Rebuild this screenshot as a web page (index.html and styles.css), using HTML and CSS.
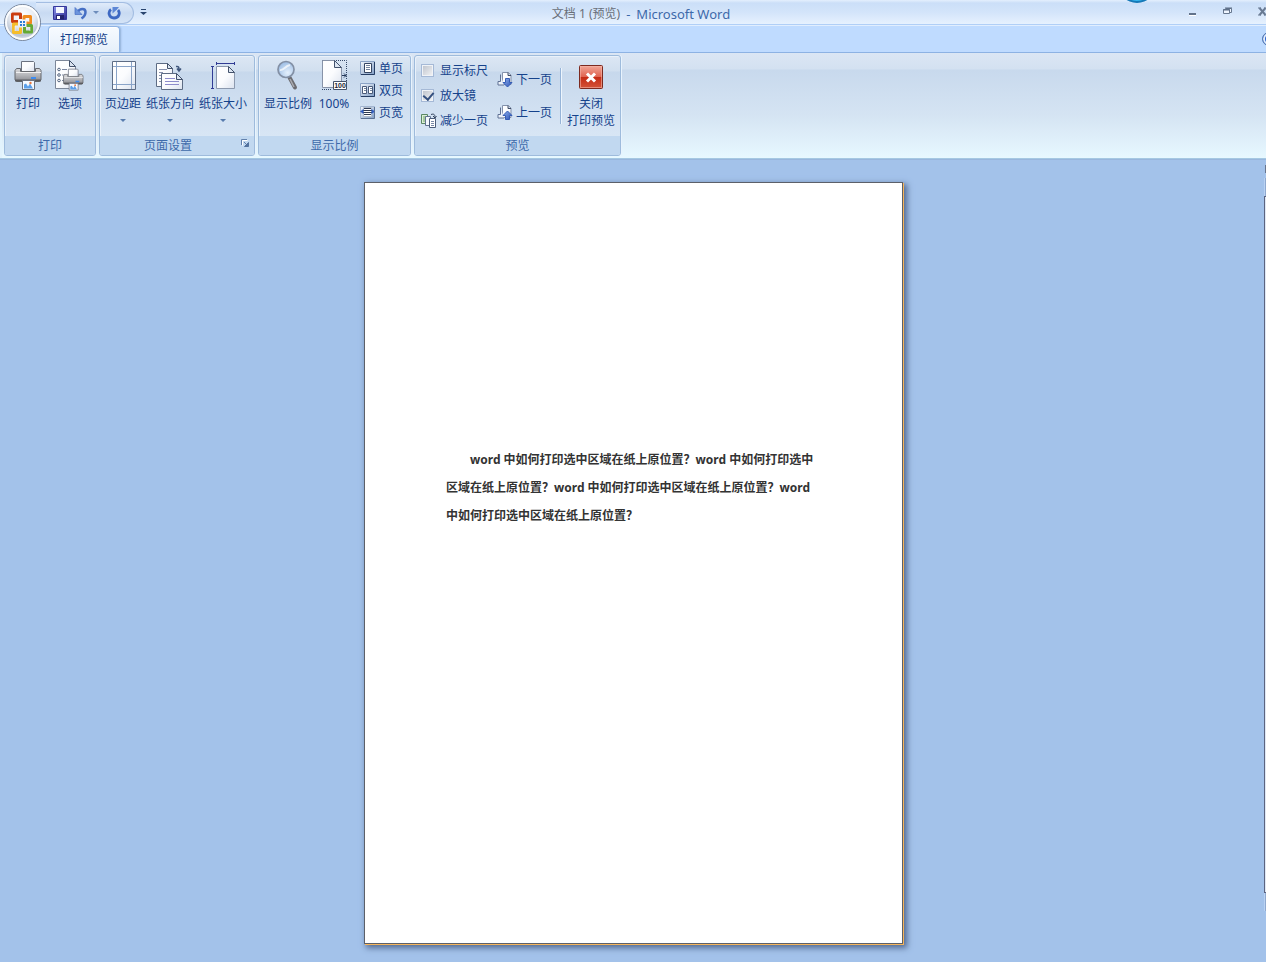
FILE: index.html
```html
<!DOCTYPE html>
<html lang="zh-CN">
<head>
<meta charset="utf-8">
<meta name="viewport" content="width=device-width, initial-scale=1">
<title>文档 1 (预览) - Microsoft Word</title>
<link rel="stylesheet" href="styles.css">
</head>
<body>
<svg class="defs" width="0" height="0" aria-hidden="true">
  <defs>
    <linearGradient id="paper" x1="0" y1="0" x2="1" y2="1"><stop offset="0" stop-color="#fff"/><stop offset=".5" stop-color="#fbfcfe"/><stop offset="1" stop-color="#dbe2ee"/></linearGradient>
    <linearGradient id="metal" x1="0" y1="0" x2="0" y2="1"><stop offset="0" stop-color="#d9d9dc"/><stop offset=".5" stop-color="#b5b6ba"/><stop offset="1" stop-color="#8a8b90"/></linearGradient>
    <linearGradient id="blue" x1="0" y1="0" x2="1" y2="1"><stop offset="0" stop-color="#8fb2ee"/><stop offset="1" stop-color="#2b50b4"/></linearGradient>
    <linearGradient id="tile" x1="0" y1="0" x2="1" y2="1"><stop offset="0" stop-color="#f4f8fd"/><stop offset="1" stop-color="#7f9cc4"/></linearGradient>
    <linearGradient id="disk" x1="0" y1="0" x2="1" y2="1"><stop offset="0" stop-color="#8c93ea"/><stop offset="1" stop-color="#2a2a91"/></linearGradient>
    <linearGradient id="red" x1="0" y1="0" x2="0" y2="1"><stop offset="0" stop-color="#f2a899"/><stop offset=".48" stop-color="#e06552"/><stop offset=".5" stop-color="#c42a14"/><stop offset="1" stop-color="#d4553a"/></linearGradient>
    <radialGradient id="orb" cx=".5" cy=".3" r=".7"><stop offset="0" stop-color="#fff"/><stop offset=".5" stop-color="#e6eaf1"/><stop offset=".8" stop-color="#b9c3d2"/><stop offset="1" stop-color="#eef3fa"/></radialGradient>
    <radialGradient id="lens" cx=".6" cy=".7" r=".7"><stop offset="0" stop-color="#e4f0fc"/><stop offset="1" stop-color="#9dbde4"/></radialGradient>
    <g id="printer">
      <path d="M8.500 1.500h12l1 1v9h-13z" fill="url(#paper)" stroke="#6b7280"/>
      <path d="M3.500 8.500h4v3h15v-3h4l1.500 2v9l-1.500 2h-23l-1.500-2v-9z" fill="url(#metal)" stroke="#66686d"/>
      <path d="M3 12.500h25" stroke="#f0f0f1"/>
      <path d="M2 20.500h26" stroke="#5b5c60" stroke-width="2"/>
      <path d="M18 18h5" stroke="#3e8cf0" stroke-width="2"/>
      <path d="M9.500 20.500h12v9h-12z" fill="#f5f9ff" stroke="#6b7280"/>
      <path d="M11 28.500v-4l2-1 2 3 2-3 3 5z" fill="#5b9fe9"/><circle cx="17.500" cy="23" r="1.200" fill="#e9783e"/>
    </g>
    <g id="page-small">
      <path d="M5.500 .5h6l2.500 2.500v9.500h-8.500z" fill="url(#paper)" stroke="#8391ab"/>
      <path d="M11 .5v3h3" fill="#cbd6e8" stroke="#3e4c66"/>
      <path d="M3.500 2.500v7H1v3.500h6" fill="#edf2fa" stroke="#5f7194"/>
    </g>
  </defs>
</svg>

<header class="titlebar">
  <button class="orb" type="button" aria-label="Office">
    <svg width="40" height="40" viewBox="0 0 40 40">
      <circle cx="20.500" cy="20.500" r="18" fill="url(#orb)" stroke="#77869d"/>
      <circle cx="20.500" cy="20.500" r="16.500" fill="none" stroke="#fff" stroke-opacity=".9" stroke-width="2"/>
      <g fill="none" stroke-width="3" stroke-linejoin="round">
        <path d="M16 19.500h-5.500v-7.500h8v5" stroke="#cb3c10"/>
        <path d="M22 17.500v-3h6.500v6.500h-4" stroke="#f08a1c"/>
        <path d="M16 22h-4.500v8.500h7v-5" stroke="#f5bd2d"/>
        <path d="M24.500 23.500h5v6.500h-7v-5" stroke="#64a934"/>
      </g>
      <path d="M12 13.500v4.500M27 16v4M13 24v5M28 25v4" stroke="#fff" stroke-opacity=".5"/>
      <g fill="#2d7cd4"><rect x="18" y="19" width="2" height="2"/><rect x="21" y="19" width="2" height="2"/><rect x="18" y="22" width="2" height="2"/><rect x="21" y="22" width="2" height="2"/></g>
    </svg>
  </button>
  <div class="quick">
    <button type="button" aria-label="保存"><svg width="16" height="16" viewBox="0 0 16 16"><path d="M1.500 1.500h13v13h-13z" fill="url(#disk)" stroke="#35389c"/><path d="M4 2h8v6H4z" fill="#f4f7ff"/><path d="M4 10h8v4.500H4z" fill="#23236d"/><path d="M5 11h3v3H5z" fill="#fff"/></svg></button>
    <button type="button" aria-label="撤消" class="undo"><svg width="14" height="14" viewBox="0 0 14 14"><path d="M3.500 6c2.500-4 8-4 8 0 0 3-1.500 5-4 6.500" fill="none" stroke="#466fc4" stroke-width="2.500"/><path d="M1 1.500V8.500h7z" fill="#6c94dc" stroke="#466fc4" stroke-width=".7"/></svg></button>
    <button type="button" aria-label="撤消选项" class="undo-more"><svg width="6" height="4" viewBox="0 0 6 4"><path d="M0 0h6L3 3z" fill="#6c8cbb"/></svg></button>
    <button type="button" aria-label="重复"><svg width="14" height="14" viewBox="0 0 14 14"><path d="M4 3.500C.5 6 2 12 7 12s6.500-5 4-8" fill="none" stroke="#3d68c2" stroke-width="2.800"/><path d="M5.500 7.500V1H12l-2 2.500z" fill="#5d87d6"/></svg></button>
  </div>
  <button type="button" class="customize" aria-label="自定义快速访问工具栏"><svg width="7" height="8" viewBox="0 0 7 8"><path d="M1 1.500h5" stroke="#29456f"/><path d="M0 4h7L3.500 7z" fill="#29456f"/></svg></button>
  <h1 class="title"><span class="doc">文档 1 (预览)</span><span>-</span><span>Microsoft Word</span></h1>
  <div class="window-buttons">
    <button type="button" aria-label="最小化"><svg width="10" height="12" viewBox="0 0 10 12"><path d="M1 9h7" stroke="#62738b" stroke-width="2"/><path d="M1 10.500h7" stroke="#fff"/></svg></button>
    <button type="button" aria-label="还原"><svg width="10" height="12" viewBox="0 0 10 12"><path d="M2.500 3.500h6v4h-2M.5 4.500h6v4h-6z" fill="#eef5ff" stroke="#687990"/><path d="M2 3h7M0 5h7" stroke="#596a83"/></svg></button>
    <button type="button" aria-label="关闭"><svg width="10" height="12" viewBox="0 0 10 12"><path d="M1.500 3l6 7M7.500 3l-6 7" stroke="#697a93" stroke-width="2"/><path d="M0 3h3M6 3h3M0 10h3M6 10h3" stroke="#697a93"/></svg></button>
  </div>
  <div class="floating-ball"></div>
</header>

<nav class="tabs">
  <button type="button" class="tab">打印预览</button>
  <button type="button" class="help" aria-label="帮助"></button>
</nav>

<main class="app">
  <div class="ribbon">
    <section class="group group-print">
      <div class="tools">
        <button type="button" class="big"><svg width="32" height="34" viewBox="0 0 32 34"><use href="#printer" x="1" y="1"/></svg><span>打印</span></button>
        <button type="button" class="big"><svg width="32" height="34" viewBox="0 0 32 34"><path d="M1.500 1.500h14l6 6v22h-20z" fill="url(#paper)" stroke="#7c8799"/><path d="M15.500 1.500v6h6z" fill="#dce5f1" stroke="#43526c"/><g fill="#fff" stroke="#52647f"><circle cx="5" cy="10.500" r="1.300"/><circle cx="5" cy="16" r="1.300"/><circle cx="5" cy="21.500" r="1.300"/></g><path d="M8 10.500h5M8 16h3M8 21.500h3" stroke="#7986a0"/><g transform="translate(8 9) scale(.75)"><use href="#printer"/></g></svg><span>选项</span></button>
      </div>
      <h2>打印</h2>
    </section>

    <section class="group group-setup">
      <div class="tools">
        <button type="button" class="big"><svg width="32" height="34" viewBox="0 0 32 34"><path d="M5.500 2.500h23v28h-23z" fill="url(#paper)" stroke="#5d6c84"/><path d="M9.500 3v27M24.500 3v27M6 7.500h22M6 25.500h22" stroke="#8aa4c8"/></svg><span>页边距</span><i class="arrow"></i></button>
        <button type="button" class="big"><svg width="32" height="34" viewBox="0 0 32 34"><path d="M2.500 4.500h11l5 5v18h-16z" fill="url(#paper)" stroke="#5d6c84"/><path d="M13.500 4.500v5h5z" fill="#dce5f1" stroke="#43526c"/><path d="M5 10.500h8M5 13.500h4M5 16.500h3M5 19.500h3M5 22.500h3" stroke="#8791ae"/><path d="M7.500 14.500h15l6 6v10h-21z" fill="url(#paper)" stroke="#5d6c84"/><path d="M22.500 14.500v6h6z" fill="#dce5f1" stroke="#43526c"/><path d="M11 19.500h10M11 22.500h14M11 25.500h14" stroke="#8d8ccb"/><path d="M22 7.500c3-.5 3 1 3 4M23 9.500l2 2.500 2-2.500" fill="none" stroke="#40577d" stroke-width="1.500"/></svg><span>纸张方向</span><i class="arrow"></i></button>
        <button type="button" class="big"><svg width="32" height="34" viewBox="0 0 32 34"><path d="M9.500 7.500h12l6 6v16h-18z" fill="url(#paper)" stroke="#8c99ae"/><path d="M21.500 7.500v6h6z" fill="#dce5f1" stroke="#43526c"/><path d="M9 4.500h19M9.500 3v3M27.500 3v3M5.500 7v23M4 7.500h3M4 29.500h3" stroke="#313c94"/></svg><span>纸张大小</span><i class="arrow"></i></button>
      </div>
      <h2>页面设置</h2>
      <button type="button" class="launcher" aria-label="页面设置对话框"><svg width="9" height="9" viewBox="0 0 9 9"><path d="M.5 6V.5H6" fill="none" stroke="#6280ab"/><path d="M1.500 6.500v-5h5" fill="none" stroke="#fff"/><path d="M3 3l3 3" stroke="#6280ab"/><path d="M3.500 7.500h4v-4z" fill="#54739f" stroke="#54739f"/></svg></button>
    </section>

    <section class="group group-zoom">
      <div class="tools">
        <button type="button" class="big"><svg width="32" height="34" viewBox="0 0 32 34"><path d="M17.500 18.500l5.500 10" stroke="#6c6c71" stroke-width="4" stroke-linecap="round"/><path d="M18 20l4 8" stroke="#aaaab0" stroke-width="1.500"/><circle cx="14" cy="10.500" r="8" fill="url(#lens)" stroke="#8390a5" stroke-width="1.700"/><path d="M8 11c3 1 5-4 10-5" fill="none" stroke="#fff" stroke-opacity=".7" stroke-width="2"/></svg><span>显示比例</span></button>
        <button type="button" class="big"><svg width="32" height="34" viewBox="0 0 32 34"><path d="M4 1.500h24.500V29M4 30.500h10" fill="none" stroke="#354969" stroke-dasharray="1 1"/><path d="M4.500 1.500h12l7 7v20h-19z" fill="url(#paper)" stroke="#8793a8"/><path d="M16.500 1.500v7h7z" fill="#dce5f1" stroke="#43526c"/><path d="M24 16.500h4M26 14.500l2 2-2 2" fill="none" stroke="#26395a"/><path d="M15.500 22.500h13v8h-13z" fill="#fff" stroke="#44536b"/><text x="22" y="29" class="tiny">100</text></svg><span>100%</span></button>
        <div class="column rows-22">
          <button type="button" class="small"><svg width="16" height="16" viewBox="0 0 16 16"><path d="M.5 1.500h14v13H.5z" fill="url(#tile)" stroke="#8ba3c6"/><path d="M4.500 3.500h7v9h-7z" fill="#fff" stroke="#354562"/><path d="M6 5.500h4M6 7.500h4M6 9.500h4" stroke="#74849e"/><path d="M1 14.500h13.500V2" fill="none" stroke="#263d63"/></svg>单页</button>
          <button type="button" class="small"><svg width="16" height="16" viewBox="0 0 16 16"><path d="M.5 1.500h14v13H.5z" fill="url(#tile)" stroke="#8ba3c6"/><path d="M2.500 4.500h4v7h-4zM8.500 4.500h4v7h-4z" fill="#fff" stroke="#4a5b7a"/><path d="M4 6.500h2M4 8.500h2M10 6.500h2M10 8.500h2" stroke="#74849e"/><path d="M1 14.500h13.500V2" fill="none" stroke="#263d63"/></svg>双页</button>
          <button type="button" class="small"><svg width="16" height="16" viewBox="0 0 16 16"><path d="M.5 2.500h14v12H.5z" fill="url(#tile)" stroke="#a3b6d0"/><path d="M3.500 3.500h8v9h-8z" fill="#fff" stroke="#b0bccd"/><path d="M4 4.500h7M3 6.500h9M3 8.500h9M4 10.500h7" stroke="#2d3950"/><path d="M3.500 5v5L0 7.500zM11.500 5v5l3.500-2.500z" fill="#335fc2"/><path d="M1 14.500h13.500V3" fill="none" stroke="#5b7193"/></svg>页宽</button>
        </div>
      </div>
      <h2>显示比例</h2>
    </section>

    <section class="group group-preview">
      <div class="tools">
        <div class="column rows-25">
          <label class="small"><input type="checkbox">显示标尺</label>
          <label class="small"><input type="checkbox" checked>放大镜</label>
          <button type="button" class="small"><svg width="16" height="16" viewBox="0 0 16 16"><path d="M.5 1.500h6v9h-6z" fill="#dcefd6" stroke="#5a8763"/><path d="M2 4h3M2 6h3M2 8h3" stroke="#6aa163"/><path d="M4.500 3.500h5v9h-5z" fill="#f5f8fd" stroke="#627290"/><path d="M8.500 5.500h6v9h-6z" fill="#fff" stroke="#4b5d7b"/><path d="M10 8.500h3M10 10.500h3M10 12.500h3" stroke="#7889a6"/><path d="M10 1.500c3-1 4 0 4 3M12 3l2 2 1.500-2" fill="none" stroke="#34445e"/></svg>减少一页</button>
        </div>
        <div class="column rows-33">
          <button type="button" class="small"><svg width="16" height="16" viewBox="0 0 16 16"><use href="#page-small"/><path d="M8.500 6.500h4v4h2.500l-4.500 4.500L6 10.500h2.500z" fill="url(#blue)" stroke="#355cb5"/></svg>下一页</button>
          <button type="button" class="small"><svg width="16" height="16" viewBox="0 0 16 16"><use href="#page-small"/><path d="M8.500 14.500h4v-4h2.500L10.500 6 6 10.500h2.500z" fill="url(#blue)" stroke="#355cb5"/></svg>上一页</button>
        </div>
        <div class="separator"></div>
        <button type="button" class="big"><svg width="32" height="34" viewBox="0 0 32 34"><rect x="4.500" y="6.500" width="23" height="23" rx="1" fill="url(#red)" stroke="#7c2a20"/><rect x="5.500" y="7.500" width="21" height="21" fill="none" stroke="#f5b6a8" stroke-opacity=".6"/><path d="M12 14.500l8 8M20 14.500l-8 8" stroke="#fff" stroke-width="3"/></svg><span>关闭<br>打印预览</span></button>
      </div>
      <h2>预览</h2>
    </section>
  </div>

  <div class="workspace">
    <article class="sheet">
      <p>word 中如何打印选中区域在纸上原位置？word 中如何打印选中<br>区域在纸上原位置？word 中如何打印选中区域在纸上原位置？word<br>中如何打印选中区域在纸上原位置？</p>
    </article>
    <div class="scroll-edge"><i class="ruler-toggle"></i><i class="scroll-end"></i><i class="scroll-thumb"></i><i class="scroll-end"></i></div>
  </div>
</main>
</body>
</html>
```
FILE: styles.css
```css
* { box-sizing: border-box; }

body {
  margin: 0;
  min-height: 100vh;
  display: flex;
  flex-direction: column;
  overflow: hidden;
  background: #a3c2ea;
  color: #15428b;
  font: 12px/17px "Noto Sans", "Noto Sans CJK SC", sans-serif;
}

button {
  margin: 0;
  padding: 0;
  border: 0;
  background: none;
  color: inherit;
  font: inherit;
}

svg { display: block; flex: none; }
.defs { position: absolute; }

.tiny {
  fill: #1c2433;
  font: bold 7px "Liberation Sans", sans-serif;
  text-anchor: middle;
}

/* Title bar */
.titlebar {
  position: relative;
  display: flex;
  align-items: flex-start;
  height: 25px;
  background: linear-gradient(#e4effd 0, #cbdff8 3px, #d3e4fa 50%, #e6f1fe 100%);
  border-bottom: 1px solid #b0cff7;
}

.orb {
  position: absolute;
  left: 2px;
  top: 2px;
  z-index: 2;
}

.quick {
  display: flex;
  align-items: center;
  height: 22px;
  margin: 2px 0 0 36px;
  padding: 0 12px 0 16px;
  border: 1px solid #a3bde2;
  border-left: 0;
  border-radius: 0 12px 12px 0;
  background: linear-gradient(#e0ebfa, #c8daf2 50%, #d5e4f7);
}

.undo { margin-left: 6px; }
.undo-more { margin: 0 8px 0 5px; }
.customize { margin: 8px 0 0 6px; }

.title {
  position: absolute;
  left: 0;
  right: 0;
  top: 5px;
  display: flex;
  justify-content: center;
  gap: 6px;
  margin: 0;
  padding-left: 16px;
  color: #3e6aaa;
  font-size: 13px;
  font-weight: 400;
  line-height: 18px;
}

.doc { color: #696f78; font-size: 12px; }

.window-buttons {
  display: flex;
  gap: 25px;
  margin: 5px -2px 0 auto;
}

.floating-ball {
  position: absolute;
  right: 110px;
  top: -34px;
  width: 38px;
  height: 37px;
  border: 2px solid #1579b8;
  border-radius: 50%;
  background: #35b5ee;
  clip-path: inset(34px 0 0 0);
}

/* Tabs */
.tabs {
  display: flex;
  align-items: flex-end;
  justify-content: space-between;
  height: 28px;
  padding-left: 48px;
  overflow: hidden;
  background: #bfdbff;
  border-bottom: 1px solid #8db2e3;
  box-shadow: inset 0 1px #e1eefe;
}

.tab {
  height: 26px;
  padding: 0 11px;
  border: 1px solid #8db2e3;
  border-bottom: 0;
  border-radius: 4px 4px 0 0;
  background: linear-gradient(#f7fbff, #e5effa);
  box-shadow: inset 1px 1px #fff, 1px 0 2px #91afd7;
}

.help {
  width: 14px;
  height: 14px;
  margin: 0 -10px 6px 0;
  border: 1px solid #5579ae;
  border-radius: 50%;
  background: #2e63d0;
  box-shadow: inset 0 0 0 2px #e3eefd;
}

/* Ribbon */
.app {
  display: flex;
  flex: 1;
  flex-direction: column;
}

.ribbon {
  display: flex;
  gap: 3px;
  padding: 2px 4px 2px;
  background: linear-gradient(#dbe6f4 0, #d3e1f1 16px, #c8d9ed 17px, #d5e4f3 60%, #e7f8ff 100%);
  border-bottom: 1px solid #a5c8e2;
  box-shadow: inset 2px 0 #e2f3fd, 0 1px #98b6dc;
  position: relative;
}

.group {
  position: relative;
  display: flex;
  flex-direction: column;
  min-height: 101px;
  border: 1px solid #9ebbdc;
  border-radius: 3px;
  background: linear-gradient(#dce7f4 0, #d1dfef 15px, #c7d8ec 16px, #d8e6f5 80px);
  box-shadow: 1px 0 #e8f3fd, inset 1px 1px #e9f1fa;
}

.group-print { width: 92px; }
.group-setup { width: 156px; }
.group-zoom { width: 153px; }
.group-preview { width: 207px; }

.tools {
  display: flex;
  flex: 1;
  gap: 6px;
  padding: 3px 5px 0;
}

.group-setup .tools { gap: 5px; }
.group-preview .tools { padding-left: 6px; }

.group h2 {
  height: 19px;
  margin: 0;
  border-radius: 0 0 2px 2px;
  background: #c1d8f0;
  color: #3e6aaa;
  font-size: 12px;
  font-weight: 400;
  line-height: 19px;
  text-align: center;
}

.group-setup h2 { padding-right: 18px; }

.big {
  display: flex;
  flex-direction: column;
  align-items: center;
  align-self: flex-start;
  white-space: nowrap;
}

.big span { margin-top: 2px; }
.group-print .big { width: 36px; }

.arrow {
  width: 6px;
  height: 3px;
  margin-top: 7px;
  background: #587cae;
  clip-path: polygon(0 0, 100% 0, 50% 100%);
}

.column {
  display: grid;
  align-content: start;
}

.rows-22 { grid-auto-rows: 22px; margin: -2px 0 0 4px; }
.rows-25 { grid-auto-rows: 25px; margin-top: -1px; }
.rows-33 { grid-auto-rows: 33px; margin: 4px 0 0 3px; }

.small {
  display: flex;
  align-items: center;
  gap: 3px;
  white-space: nowrap;
}

.small input {
  appearance: none;
  width: 13px;
  height: 13px;
  margin: 0 3px 0 0;
  border: 1px solid #a5b9d6;
  background: linear-gradient(135deg, #bcc1ca, #f4f5f7);
  box-shadow: inset 0 0 0 1px #f0f3f7;
}

.small input:checked::before {
  content: "";
  display: block;
  width: 5px;
  height: 8px;
  margin: 0 0 0 3px;
  border: solid #34507f;
  border-width: 0 2px 2px 0;
  rotate: 40deg;
}

.separator {
  width: 2px;
  height: 56px;
  margin: 9px -1px 0 2px;
  border-left: 1px solid #96b4d8;
  background: #edf5fd;
}

.launcher {
  position: absolute;
  right: 4px;
  bottom: 7px;
}

/* Preview area */
.workspace {
  position: relative;
  flex: 1;
  padding: 23px 0 18px 1px;
}

.sheet {
  width: 539px;
  max-width: 100%;
  min-height: 762px;
  margin: 0 auto;
  padding: 263px 80px 80px 81px;
  border: 1px solid #5c6069;
  background: #fff;
  box-shadow: 1px 1px #f6b55b, 3px 3px 6px 1px #536a91;
  color: #333;
  font: bold 12px/28px "Noto Sans", "Noto Sans CJK SC", sans-serif;
}

.sheet p {
  margin: 0;
  text-indent: 24px;
  white-space: nowrap;
}

.scroll-edge {
  position: absolute;
  top: 6px;
  right: 0;
  display: flex;
  flex-direction: column;
  width: 2px;
  height: 746px;
}

.ruler-toggle { height: 8px; margin: 0 0 5px 1px; background: #68758e; }
.scroll-end { height: 18px; border-left: 1px solid #b9d2f3; background: #8fa9cf; }
.scroll-thumb { flex: 1; border: 1px solid #5c6480; border-right: 0; background: #dfe8f5; }
```
